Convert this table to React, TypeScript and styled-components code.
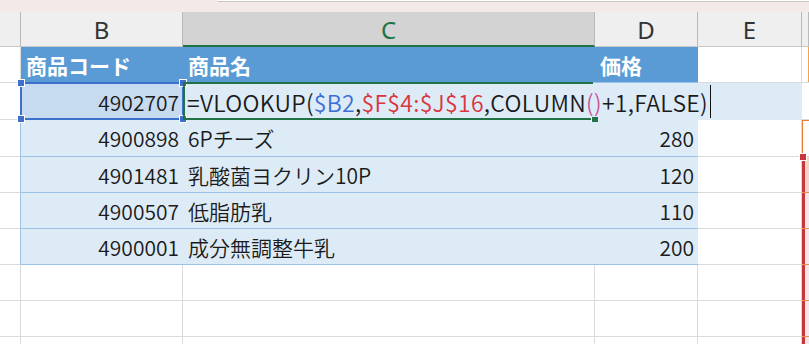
import React from "react";
import styled, { createGlobalStyle, css } from "styled-components";

const GREEN = "#217346";
const BLUE_REF = "#3d6fcd";
const RED_REF = "#c8373d";
const GRID = "#dadada";
const BAND = "#ddebf7";
const BAND_LINE = "#9bc2e6";
const HEAD_BLUE = "#5b9bd5";

const GlobalStyle = createGlobalStyle`
  html, body { margin: 0; padding: 0; background: #ffffff; }
  body {
    font-family: "Noto Sans CJK JP", "Noto Sans", sans-serif;
    overflow: hidden;
  }
`;

const Page = styled.div`
  width: 809px;
  height: 344px;
  display: flex;
  flex-direction: column;
  overflow: hidden;
  background: #ffffff;
`;

const TopBar = styled.div`
  height: 12px;
  flex: none;
  display: flex;
  align-items: flex-start;
  background: #f3e9e7;
`;

const TopTab = styled.div`
  margin-left: 218px;
  flex: 1;
  height: 1px;
  background: #ffffff;
  border-bottom: 1px solid #c9c6c4;
`;

const Sheet = styled.div`
  position: relative;
  flex: 1;
  display: grid;
  grid-template-columns: 21px 162px 412px 103px 104px 1fr;
  grid-template-rows: 35px 36px 37px 37px repeat(6, 36px);
  overflow: hidden;
`;

const ColHeader = styled.div<{ $active?: boolean }>`
  box-sizing: border-box;
  display: flex;
  align-items: center;
  justify-content: center;
  background: ${(p) => (p.$active ? "#d3d3d3" : "#efefef")};
  border-right: 1px solid #b9b9b9;
  border-bottom: ${(p) => (p.$active ? `2px solid ${GREEN}` : "1px solid #c9c9c9")};
  color: ${(p) => (p.$active ? GREEN : "#333333")};
  font-family: "Noto Sans", sans-serif;
  font-size: 24px;
  font-weight: 400;
  padding-top: 1px;
`;

type Tone = "blank" | "head" | "band" | "pick";

const Cell = styled.div<{ $tone?: Tone; $right?: boolean; $edge?: boolean }>`
  box-sizing: border-box;
  display: flex;
  align-items: center;
  justify-content: ${(p) => (p.$right ? "flex-end" : "flex-start")};
  padding: 0 4px 0 5px;
  white-space: nowrap;
  font-size: 21px;
  font-weight: 350;
  color: #1b1b1b;
  ${(p) => {
    switch (p.$tone) {
      case "head":
        return css`
          background: ${HEAD_BLUE};
          color: #ffffff;
          font-weight: 700;
          border-bottom: 1px solid ${BAND_LINE};
        `;
      case "band":
        return css`
          background: ${BAND};
          border-bottom: 1px solid ${BAND_LINE};
        `;
      case "pick":
        return css`
          background: #c6daf0;
        `;
      default:
        return css`
          background: #ffffff;
          border-right: 1px solid ${p.$edge ? BAND_LINE : GRID};
          border-bottom: 1px solid ${GRID};
        `;
    }
  }}
`;

/* In-cell formula editor spanning C2 through E2 */
const Editor = styled.div`
  grid-column: 3 / span 3;
  display: flex;
  align-items: center;
  padding-left: 4px;
  background: ${BAND};
  white-space: nowrap;
  font-size: 23px;
  font-weight: 350;
  letter-spacing: 0.3px;
  color: #1b1b1b;
`;

const Token = styled.span<{ $kind: "b" | "r" | "p" }>`
  color: ${(p) => (p.$kind === "b" ? "#3b6fd4" : p.$kind === "r" ? "#d9363e" : "#c8569a")};
`;

const Caret = styled.span`
  display: inline-block;
  width: 1px;
  height: 33px;
  margin-left: 2px;
  background: #111111;
`;

type Side = "plain" | "tick" | "boxed" | "rangeTop" | "range";

/* Partially visible column F, where the $F$4:$J$16 reference starts */
const SideCell = styled.div<{ $side?: Side }>`
  box-sizing: border-box;
  border-bottom: 1px solid ${GRID};
  background: #ffffff;
  ${(p) => {
    switch (p.$side) {
      case "tick":
        return css`
          box-shadow: inset -1px 0 0 #f2a24a;
          background-clip: content-box;
          padding: 13px 0 10px;
        `;
      case "boxed":
        return css`
          border-left: 1px solid #ed7d31;
          border-top: 1px solid #ed7d31;
        `;
      case "rangeTop":
        return css`
          background: #f6d5c8;
          border-bottom: 1px solid #ee8a4c;
          box-shadow: inset 3px 0 0 ${RED_REF};
        `;
      case "range":
        return css`
          background: #f9e7e6;
          border-bottom: 1px solid #ee8a4c;
          box-shadow: inset 3px 0 0 ${RED_REF};
        `;
      default:
        return css``;
    }
  }}
`;

/* Reference highlight around $B2 */
const RefBox = styled.div`
  position: absolute;
  left: 20px;
  top: 70px;
  width: 164px;
  height: 38px;
  box-sizing: border-box;
  border: 2px solid ${BLUE_REF};
  pointer-events: none;
`;

const Handle = styled.span<{ $x: "l" | "r"; $y: "t" | "b"; $color: string }>`
  position: absolute;
  width: 6px;
  height: 6px;
  background: ${(p) => p.$color};
  border: 1px solid #ffffff;
  ${(p) => (p.$x === "l" ? "left: -5px;" : "right: -5px;")}
  ${(p) => (p.$y === "t" ? "top: -5px;" : "bottom: -5px;")}
`;

/* Active cell frame for C2 (right side hidden under the editor) */
const ActiveFrame = styled.div`
  position: absolute;
  left: 183px;
  top: 70px;
  width: 410px;
  height: 38px;
  box-sizing: border-box;
  border: 2px solid ${GREEN};
  border-right: none;
  pointer-events: none;
`;

const FillHandle = styled.span`
  position: absolute;
  right: -5px;
  bottom: -4px;
  width: 6px;
  height: 5px;
  background: ${GREEN};
  border-left: 1px solid #ffffff;
`;

const RangeHandle = styled.span`
  position: absolute;
  left: 799px;
  top: 141px;
  width: 6px;
  height: 6px;
  background: ${RED_REF};
  border: 1px solid #ffffff;
`;

const rows = [
  { code: "4900898", name: "6Pチーズ", price: "280" },
  { code: "4901481", name: "乳酸菌ヨクリン10P", price: "120" },
  { code: "4900507", name: "低脂肪乳", price: "110" },
  { code: "4900001", name: "成分無調整牛乳", price: "200" },
];

const sideFor = (i: number): Side => (i === 0 ? "boxed" : i === 1 ? "rangeTop" : "range");

export default function App() {
  return (
    <Page>
      <GlobalStyle />
      <TopBar>
        <TopTab />
      </TopBar>
      <Sheet>
        <ColHeader />
        <ColHeader>B</ColHeader>
        <ColHeader $active>C</ColHeader>
        <ColHeader>D</ColHeader>
        <ColHeader>E</ColHeader>
        <ColHeader />

        <Cell />
        <Cell $tone="head">商品コード</Cell>
        <Cell $tone="head">商品名</Cell>
        <Cell $tone="head">価格</Cell>
        <Cell />
        <SideCell $side="tick" />

        <Cell $edge />
        <Cell $tone="pick" $right>
          4902707
        </Cell>
        <Editor>
          =VLOOKUP(<Token $kind="b">$B2</Token>,<Token $kind="r">$F$4:$J$16</Token>,COLUMN
          <Token $kind="p">()</Token>+1,FALSE)
          <Caret />
        </Editor>
        <SideCell />

        {rows.map((r, i) => (
          <React.Fragment key={r.code}>
            <Cell $edge />
            <Cell $tone="band" $right>
              {r.code}
            </Cell>
            <Cell $tone="band">{r.name}</Cell>
            <Cell $tone="band" $right>
              {r.price}
            </Cell>
            <Cell />
            <SideCell $side={sideFor(i)} />
          </React.Fragment>
        ))}

        {[0, 1, 2].map((k) => (
          <React.Fragment key={k}>
            <Cell />
            <Cell />
            <Cell />
            <Cell />
            <Cell />
            <SideCell $side="range" />
          </React.Fragment>
        ))}

        <RefBox>
          <Handle $x="l" $y="t" $color={BLUE_REF} />
          <Handle $x="r" $y="t" $color={BLUE_REF} />
          <Handle $x="l" $y="b" $color={BLUE_REF} />
          <Handle $x="r" $y="b" $color={BLUE_REF} />
        </RefBox>
        <ActiveFrame>
          <FillHandle />
        </ActiveFrame>
        <RangeHandle />
      </Sheet>
    </Page>
  );
}
